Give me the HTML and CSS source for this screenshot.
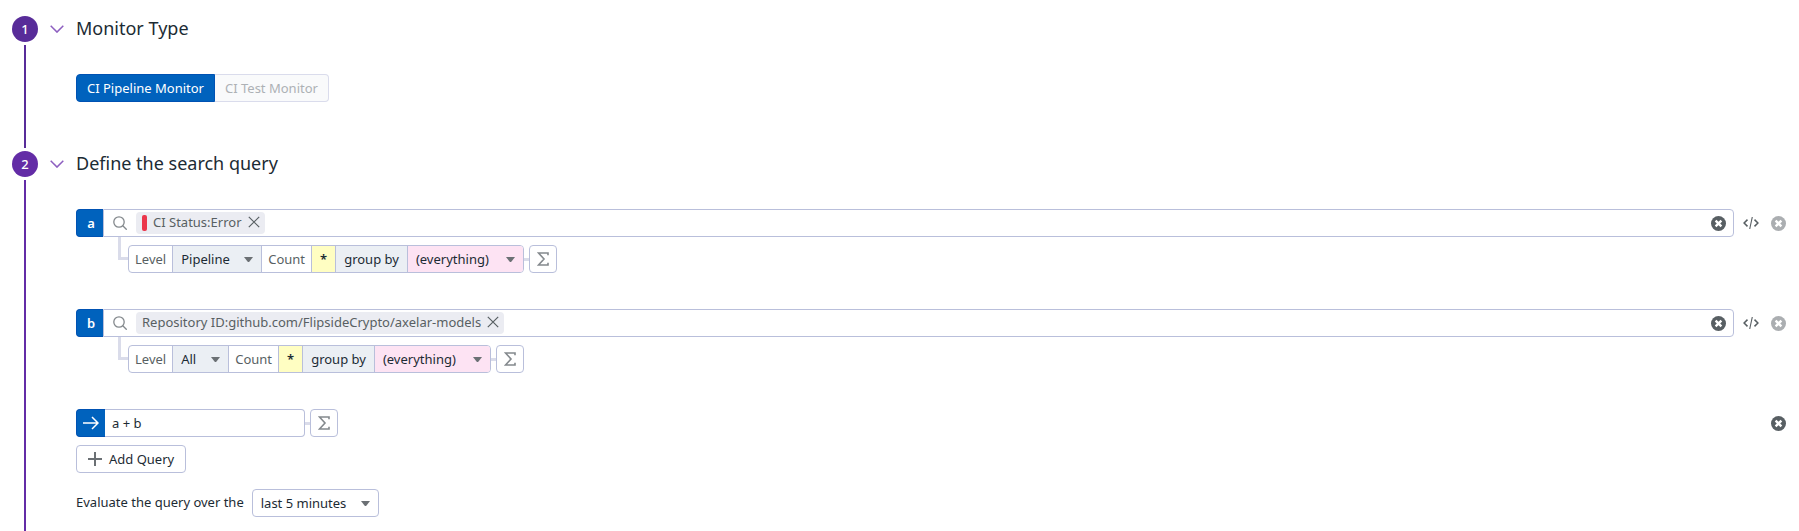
FILE: index.html
```
<!DOCTYPE html>
<html lang="en">
<head>
<meta charset="utf-8">
<title>New CI Monitor</title>
<link rel="stylesheet" href="styles.css">
</head>
<body>
<svg class="sprite" aria-hidden="true">
  <symbol id="chevron" viewBox="0 0 14 8"><path d="M.7.8 7 7.1 13.3.8" fill="none" stroke="currentColor" stroke-width="1.5"/></symbol>
  <symbol id="search" viewBox="0 0 14 14"><circle cx="6" cy="6" r="5.2" fill="none" stroke="currentColor" stroke-width="1.3"/><path d="m9.8 9.8 3.9 3.9" stroke="currentColor" stroke-width="1.3"/></symbol>
  <symbol id="cross" viewBox="0 0 12 12"><path d="M.8.8 11.2 11.2M11.2.8.8 11.2" fill="none" stroke="currentColor" stroke-width="1.2"/></symbol>
  <symbol id="clear" viewBox="0 0 14 14"><circle cx="7" cy="7" r="7" fill="currentColor"/><path d="m4.300 4.300 5.400 5.400M9.700 4.300l-5.400 5.400" stroke="#fff" stroke-width="2.200"/></symbol>
  <symbol id="code" viewBox="0 0 16 12"><path d="M4.500 2.600 1.100 6l3.400 3.400M11.500 2.600 14.900 6l-3.400 3.400" fill="none" stroke="currentColor" stroke-width="1.500"/><path d="M9.300 0 6.700 12" stroke="currentColor" stroke-width="1.100"/></symbol>
  <symbol id="sigma" viewBox="0 0 12 14"><path d="M11 3.200V1H1.500L7 7l-5.500 6H11v-2.200" fill="none" stroke="currentColor" stroke-width="1.600"/></symbol>
  <symbol id="caret" viewBox="0 0 9 5"><path d="M0 0h9L5.500 4.400q-1 1-2 0z" fill="currentColor"/></symbol>
  <symbol id="arrow" viewBox="0 0 16 14"><path d="M0 7h15M9 1l6 6-6 6" fill="none" stroke="currentColor" stroke-width="1.500"/></symbol>
  <symbol id="plus" viewBox="0 0 14 14"><path d="M7 0v14M0 7h14" stroke="currentColor" stroke-width="2"/></symbol>
</svg>

<main class="steps">
  <section class="step">
    <div class="rail"><span class="badge">1</span><span class="line"></span></div>
    <div class="content">
      <h2 class="title"><button class="toggle" aria-label="Collapse Monitor Type"><svg class="chevron"><use href="#chevron"/></svg></button>Monitor Type</h2>
      <div class="body types">
        <button class="type active">CI Pipeline Monitor</button><button class="type" disabled>CI Test Monitor</button>
      </div>
    </div>
  </section>

  <section class="step second">
    <div class="rail"><span class="badge">2</span><span class="line"></span></div>
    <div class="content">
      <h2 class="title"><button class="toggle" aria-label="Collapse Define the search query"><svg class="chevron"><use href="#chevron"/></svg></button>Define the search query</h2>
      <div class="body">
        <div class="query">
          <div class="row">
            <label class="key" for="query-a">a</label>
            <div class="search">
              <svg class="glass"><use href="#search"/></svg>
              <span class="tag"><span class="status"></span><span class="term">CI Status:Error</span><button class="icon" aria-label="Remove CI Status"><svg class="cross"><use href="#cross"/></svg></button></span>
              <input class="field" id="query-a" type="text">
              <button class="icon" aria-label="Clear search a"><svg class="clear"><use href="#clear"/></svg></button>
            </div>
            <button class="icon code-button" aria-label="Edit query a as text"><svg class="code"><use href="#code"/></svg></button>
            <button class="icon muted" aria-label="Delete query a"><svg class="clear"><use href="#clear"/></svg></button>
          </div>
          <div class="options">
            <span class="elbow"></span>
            <div class="group">
              <label class="cell" for="level-a">Level</label>
              <span class="drop level"><select id="level-a"><option>Pipeline</option></select><svg class="caret"><use href="#caret"/></svg></span>
              <span class="cell">Count</span>
              <button class="cell star">*</button>
              <label class="cell by" for="group-a">group by</label>
              <span class="drop everything"><select id="group-a"><option>(everything)</option></select><svg class="caret"><use href="#caret"/></svg></span>
            </div>
            <span class="link"></span>
            <button class="sum" aria-label="Add function to a"><svg class="sigma"><use href="#sigma"/></svg></button>
          </div>
        </div>

        <div class="query">
          <div class="row">
            <label class="key" for="query-b">b</label>
            <div class="search">
              <svg class="glass"><use href="#search"/></svg>
              <span class="tag"><span class="term">Repository ID:github.com/FlipsideCrypto/axelar-models</span><button class="icon" aria-label="Remove Repository ID"><svg class="cross"><use href="#cross"/></svg></button></span>
              <input class="field" id="query-b" type="text">
              <button class="icon" aria-label="Clear search b"><svg class="clear"><use href="#clear"/></svg></button>
            </div>
            <button class="icon code-button" aria-label="Edit query b as text"><svg class="code"><use href="#code"/></svg></button>
            <button class="icon muted" aria-label="Delete query b"><svg class="clear"><use href="#clear"/></svg></button>
          </div>
          <div class="options">
            <span class="elbow"></span>
            <div class="group">
              <label class="cell" for="level-b">Level</label>
              <span class="drop level"><select id="level-b"><option>All</option></select><svg class="caret"><use href="#caret"/></svg></span>
              <span class="cell">Count</span>
              <button class="cell star">*</button>
              <label class="cell by" for="group-b">group by</label>
              <span class="drop everything"><select id="group-b"><option>(everything)</option></select><svg class="caret"><use href="#caret"/></svg></span>
            </div>
            <span class="link"></span>
            <button class="sum" aria-label="Add function to b"><svg class="sigma"><use href="#sigma"/></svg></button>
          </div>
        </div>

        <div class="row">
          <label class="key wide" for="formula" aria-label="Formula"><svg class="arrow"><use href="#arrow"/></svg></label>
          <input class="formula" id="formula" type="text" value="a + b">
          <span class="link"></span>
          <button class="sum" aria-label="Add function to formula"><svg class="sigma"><use href="#sigma"/></svg></button>
          <button class="icon end" aria-label="Delete formula"><svg class="clear"><use href="#clear"/></svg></button>
        </div>
        <button class="add"><svg class="plus"><use href="#plus"/></svg>Add Query</button>
        <div class="evaluate">
          <label for="window">Evaluate the query over the</label>
          <span class="drop window"><select id="window"><option>last 5 minutes</option></select><svg class="caret"><use href="#caret"/></svg></span>
        </div>
      </div>
    </div>
  </section>
</main>
</body>
</html>
```
FILE: styles.css
```
* { box-sizing: border-box; }

body {
  margin: 0;
  background: #fff;
  color: #1c2b34;
  font: 13px/18px "Noto Sans", sans-serif;
}

button, input, select {
  margin: 0;
  padding: 0;
  border: 0;
  background: none;
  color: inherit;
  font: inherit;
}

svg { display: block; flex: none; }
.sprite { position: absolute; width: 0; height: 0; }

.steps {
  display: flex;
  flex-direction: column;
  gap: 3px;
  min-height: 100vh;
  padding: 16px 13px 0 12px;
}

.step { display: flex; gap: 12px; }
.second { flex: 1; }

.rail {
  display: flex;
  flex-direction: column;
  align-items: center;
  gap: 3px;
  width: 26px;
  flex: none;
}
.badge {
  width: 26px;
  height: 26px;
  border-radius: 50%;
  background: #582c99;
  color: #fff;
  font-weight: 500;
  line-height: 26px;
  text-align: center;
}
.line { flex: 1; width: 2px; background: #582c99; }
.second .badge, .second .line { background: #632ca6; }

.content { flex: 1; min-width: 0; }
.title {
  display: flex;
  align-items: center;
  gap: 12px;
  height: 26px;
  margin: 0;
  padding-bottom: 2px;
  font-size: 18px;
  font-weight: 400;
}
.toggle { padding-top: 2px; color: #8d5fc0; }
.chevron { width: 14px; height: 8px; }
.body { padding: 32px 0 14px 26px; }

.types { display: flex; padding-bottom: 46px; }
.type {
  height: 28px;
  padding: 0 10px;
  border: 1px solid #dadcec;
  border-left: 0;
  border-radius: 0 4px 4px 0;
  background: #f9fafb;
  color: #adb1b5;
}
.type.active {
  border: 1px solid #0052b3;
  border-radius: 4px 0 0 4px;
  background: #0062bd;
  color: #fff;
}

.query { margin-bottom: 36px; }
.row { display: flex; align-items: center; }
.key {
  display: grid;
  place-items: center;
  width: 27px;
  height: 28px;
  padding-left: 2px;
  flex: none;
  border: 1px solid #0052b3;
  border-right: 0;
  border-radius: 4px 0 0 4px;
  background: #0062bd;
  color: #fff;
  font-weight: 600;
}
.wide { width: 29px; padding-left: 0; }
.search {
  display: flex;
  align-items: center;
  flex: 1;
  min-width: 0;
  height: 28px;
  padding: 0 7px 0 9px;
  border: 1px solid #b9bfdb;
  border-radius: 0 4px 4px 0;
}
.glass { width: 14px; height: 14px; margin-right: 9px; color: #84898d; }
.tag {
  display: flex;
  align-items: center;
  height: 22px;
  padding: 0 5px 0 6px;
  border-radius: 4px;
  background: #ebecf2;
  color: #585f63;
  white-space: nowrap;
}
.status {
  width: 5px;
  height: 16px;
  margin-right: 6px;
  border-radius: 2px;
  background: #eb364b;
}
.term { padding-bottom: 2px; }
.tag .icon { padding: 0 0 2px 6px; }
.cross { width: 12px; height: 12px; }
.field { flex: 1; min-width: 0; outline: 0; }
.icon { color: #585f63; }
.clear { width: 15px; height: 15px; }
.code-button { margin: 0 12px 0 9px; }
.code { width: 16px; height: 12px; }
.muted { color: #abaeb1; }
.end { margin-left: auto; }

.options { display: flex; padding-left: 42px; }
.elbow {
  width: 10px;
  height: 23px;
  border: solid #dadcea;
  border-width: 0 0 3px 3px;
}
.group {
  display: flex;
  height: 28px;
  margin-top: 8px;
  border: 1px solid #b9bfdb;
  border-radius: 4px;
  overflow: hidden;
}
.group > * + * { border-left: 1px solid #b9bfdb; }
.cell {
  display: flex;
  align-items: center;
  padding: 0 6px;
  color: #585f63;
}
.star { padding: 0 8px; background: #fffec2; color: #1c2b34; font-weight: 600; }
.by { padding: 0 8px; background: #ebeff4; color: #1c2b34; }

.drop { display: grid; align-items: center; }
.drop select {
  grid-area: 1 / 1;
  height: 100%;
  padding: 0 31px 0 8px;
  appearance: none;
}
.caret {
  grid-area: 1 / 1;
  justify-self: end;
  width: 9px;
  height: 5px;
  margin-right: 8px;
  color: #6b7074;
  pointer-events: none;
}
.level { background: #ebeff4; }
.everything { background: #fde3f3; }
.everything select { padding-right: 34px; }

.link { align-self: center; width: 5px; height: 3px; background: #dadcea; }
.options .link { margin-top: 8px; }
.sum {
  display: grid;
  place-items: center;
  width: 28px;
  height: 28px;
  border: 1px solid #b9bfdb;
  border-radius: 4px;
  color: #84898d;
}
.options .sum { margin-top: 8px; }
.sigma { width: 12px; height: 14px; }

.formula {
  width: 200px;
  height: 28px;
  padding: 0 7px;
  border: 1px solid #b9bfdb;
  border-left: 0;
  border-radius: 0 4px 4px 0;
}
.arrow { width: 16px; height: 14px; }
.add {
  display: flex;
  align-items: center;
  gap: 7px;
  height: 28px;
  margin: 8px 0 16px;
  padding: 0 11px;
  border: 1px solid #b9bfdb;
  border-radius: 4px;
}
.plus { width: 14px; height: 14px; color: #6b7074; }
.evaluate { display: flex; align-items: center; gap: 8px; }
.evaluate label { padding-bottom: 2px; }
.window { height: 28px; border: 1px solid #b9bfdb; border-radius: 4px; }
```
